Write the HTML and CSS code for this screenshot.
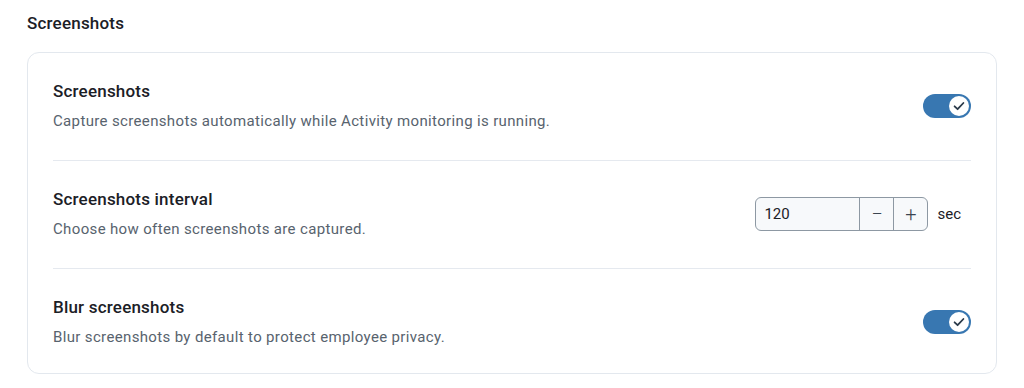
FILE: index.html
```html
<!DOCTYPE html>
<html lang="en">
<head>
    <meta charset="UTF-8">
    <meta name="viewport" content="width=device-width, initial-scale=1.0">
    <title>Screenshots settings</title>
    <link rel="stylesheet" href="styles.css">
</head>
<body>
    <div class="section">
        <h2 class="section-title">Screenshots</h2>
        <div class="card">
            <div class="row">
                <div class="row-text">
                    <div class="row-title">Screenshots</div>
                    <div class="row-desc">Capture screenshots automatically while Activity monitoring is running.</div>
                </div>
                <div class="toggle">
                    <span class="knob">
                        <svg width="14" height="14" viewBox="0 0 14 14"><path d="M2.6 7.3 L5.6 10.2 L11.4 4" fill="none" stroke="#2b3a4a" stroke-width="1.8" stroke-linecap="round" stroke-linejoin="round"/></svg>
                    </span>
                </div>
            </div>
            <div class="row">
                <div class="row-text">
                    <div class="row-title">Screenshots interval</div>
                    <div class="row-desc">Choose how often screenshots are captured.</div>
                </div>
                <div class="interval">
                    <div class="stepper">
                        <input class="stepper-input" type="text" value="120">
                        <button class="stepper-btn">&minus;</button>
                        <button class="stepper-btn">+</button>
                    </div>
                    <span class="unit">sec</span>
                </div>
            </div>
            <div class="row">
                <div class="row-text">
                    <div class="row-title">Blur screenshots</div>
                    <div class="row-desc">Blur screenshots by default to protect employee privacy.</div>
                </div>
                <div class="toggle">
                    <span class="knob">
                        <svg width="14" height="14" viewBox="0 0 14 14"><path d="M2.6 7.3 L5.6 10.2 L11.4 4" fill="none" stroke="#2b3a4a" stroke-width="1.8" stroke-linecap="round" stroke-linejoin="round"/></svg>
                    </span>
                </div>
            </div>
        </div>
    </div>
</body>
</html>
```

FILE: styles.css
```css
body {
    font-family: Roboto, "Liberation Sans", Arial, sans-serif;
    background-color: #ffffff;
    color: #1b2026;
    margin: 0;
    padding: 0;
}

.section {
    padding: 12px 27px 0 27px;
}

.section-title {
    font-size: 17px;
    font-weight: 500;
    line-height: 22px;
    letter-spacing: 0.2px;
    margin: 0 0 18px 0;
    color: #1b2026;
}

.card {
    border: 1px solid #e3e8ee;
    border-radius: 12px;
    padding: 0 25px;
}

.row {
    display: flex;
    align-items: center;
    justify-content: space-between;
    padding: 27px 0 29px 0;
    border-bottom: 1px solid #e5e9ef;
}

.row:last-child {
    border-bottom: none;
    padding-bottom: 26px;
}

.row-title {
    font-size: 17px;
    font-weight: 500;
    line-height: 22px;
    letter-spacing: 0.2px;
    color: #1b2026;
}

.row-desc {
    font-size: 15px;
    line-height: 20px;
    margin-top: 9px;
    color: #58636e;
    letter-spacing: 0.35px;
}

.toggle {
    width: 48px;
    height: 24px;
    border-radius: 12px;
    background-color: #3877b1;
    display: flex;
    align-items: center;
    justify-content: flex-end;
    padding: 0 2px;
    box-sizing: border-box;
}

.knob {
    width: 20px;
    height: 20px;
    border-radius: 50%;
    background-color: #ffffff;
    display: flex;
    align-items: center;
    justify-content: center;
}

.interval {
    display: flex;
    align-items: center;
    gap: 9px;
}

.stepper {
    display: flex;
    height: 34px;
    border: 1px solid #8d98a3;
    border-radius: 6px;
    overflow: hidden;
    background-color: #f7f9fb;
    box-sizing: border-box;
}

.stepper-input {
    width: 103px;
    border: none;
    background: transparent;
    font-family: inherit;
    font-size: 15px;
    color: #1b2026;
    padding: 0 8px;
    box-sizing: border-box;
    outline: none;
}

.stepper-btn {
    width: 34px;
    border: none;
    border-left: 1px solid #8d98a3;
    background: transparent;
    font-family: inherit;
    font-size: 20px;
    font-weight: 300;
    color: #3b4550;
    padding: 0;
    cursor: pointer;
}

.unit {
    font-size: 15px;
    color: #1b2026;
    margin-right: 10px;
}
```
